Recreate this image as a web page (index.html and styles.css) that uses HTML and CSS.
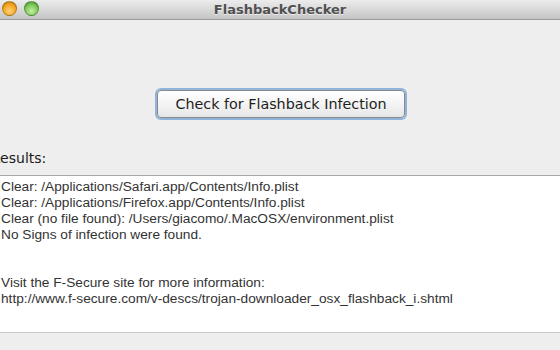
FILE: index.html
```html
<!DOCTYPE html>
<html lang="en">
<head>
  <meta charset="UTF-8">
  <meta name="viewport" content="width=device-width, initial-scale=1.0">
  <title>FlashbackChecker</title>
  <link rel="stylesheet" href="styles.css">
</head>
<body>
  <div class="window">
    <div class="titlebar">
      <div class="lights">
        <span class="light minimize"></span>
        <span class="light zoom"></span>
      </div>
      <div class="title">FlashbackChecker</div>
    </div>
    <div class="content">
      <div class="button-row">
        <button class="check-button">Check for Flashback Infection</button>
      </div>
      <div class="results-label">Results:</div>
      <div class="results">
        <p>Clear: /Applications/Safari.app/Contents/Info.plist</p>
        <p>Clear: /Applications/Firefox.app/Contents/Info.plist</p>
        <p>Clear (no file found): /Users/giacomo/.MacOSX/environment.plist</p>
        <p>No Signs of infection were found.</p>
        <p>&nbsp;</p>
        <p>&nbsp;</p>
        <p>Visit the F-Secure site for more information:</p>
        <p>http://www.f-secure.com/v-descs/trojan-downloader_osx_flashback_i.shtml</p>
      </div>
    </div>
  </div>
</body>
</html>
```

FILE: styles.css
```css
body {
  margin: 0;
  padding: 0;
  background-color: #eeeeee;
  font-family: "DejaVu Sans", sans-serif;
  overflow: hidden;
}
.window {
  width: 560px;
  height: 350px;
  display: flex;
  flex-direction: column;
}
.titlebar {
  height: 19px;
  display: flex;
  align-items: center;
  position: relative;
  background: linear-gradient(to bottom, #ececec 0%, #d9d9d9 50%, #c4c4c4 100%);
  border-bottom: 1px solid #9c9c9c;
}
.lights {
  position: absolute;
  left: 2px;
  top: 1px;
  display: flex;
  gap: 7px;
}
.light {
  width: 15px;
  height: 15px;
  border-radius: 50%;
  box-sizing: border-box;
  border: 1px solid rgba(0, 0, 0, 0.25);
}
.light.minimize {
  background: radial-gradient(circle at 50% 70%, #ffd27a 0%, #f5a623 55%, #c77b0e 100%);
}
.light.zoom {
  background: radial-gradient(circle at 50% 70%, #c6f0a4 0%, #7dc95a 55%, #3f8f2a 100%);
}
.title {
  flex: 1;
  text-align: center;
  font-size: 13px;
  font-weight: bold;
  color: #505050;
  text-shadow: 0 1px 0 rgba(255, 255, 255, 0.6);
}
.content {
  flex: 1;
  display: flex;
  flex-direction: column;
}
.button-row {
  display: flex;
  justify-content: center;
  padding-top: 70px;
  padding-left: 2px;
}
.check-button {
  width: 248px;
  height: 28px;
  font-family: "DejaVu Sans", sans-serif;
  font-size: 14.3px;
  color: #1e1e1e;
  background: linear-gradient(to bottom, #ffffff 0%, #f4f4f4 50%, #e6e6e6 100%);
  border: 1px solid #8a8a8a;
  border-radius: 4px;
  box-shadow: 0 0 0 2px #8fb4dc;
  padding: 0;
}
.results-label {
  margin-top: 32px;
  margin-left: -9px;
  font-size: 14px;
  color: #1a1a1a;
}
.results {
  margin-top: 9px;
  height: 158px;
  background-color: #ffffff;
  border-top: 1px solid #a9a9a9;
  border-bottom: 1px solid #c9c9c9;
  padding: 3px 0 0 1px;
  font-family: "Liberation Sans", sans-serif;
  font-size: 13.7px;
  color: #333333;
  box-sizing: border-box;
}
.results p {
  margin: 0;
  line-height: 16px;
  white-space: nowrap;
}
```
